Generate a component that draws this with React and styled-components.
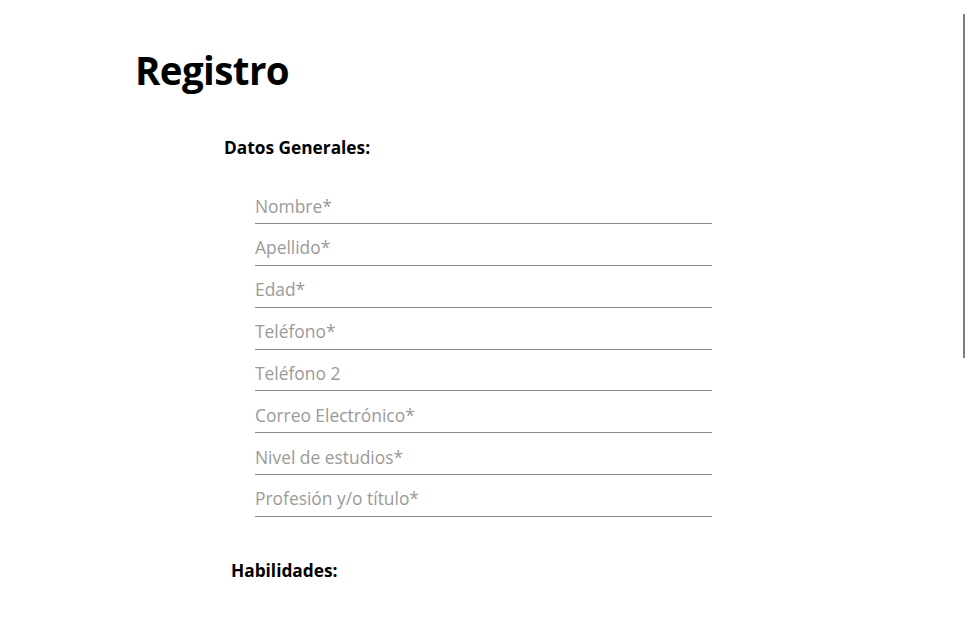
import styled, { createGlobalStyle } from "styled-components";

const GlobalStyle = createGlobalStyle({
  "html, body": {
    margin: 0,
    padding: 0,
    background: "#ffffff",
  },
  body: {
    fontFamily: '"Open Sans", "Noto Sans", sans-serif',
    color: "#000",
  },
});

const fields = [
  "Nombre*",
  "Apellido*",
  "Edad*",
  "Teléfono*",
  "Teléfono 2",
  "Correo Electrónico*",
  "Nivel de estudios*",
  "Profesión y/o título*",
];

const App = () => {
  return (
    <Page>
      <GlobalStyle />
      <Title>Registro</Title>
      <Section>
        <SectionTitle>Datos Generales:</SectionTitle>
        <Fields>
          {fields.map((f) => (
            <Input key={f} placeholder={f} />
          ))}
        </Fields>
      </Section>
      <Section>
        <SectionTitle $indent={7}>Habilidades:</SectionTitle>
      </Section>
      <ScrollThumb />
    </Page>
  );
};

const Page = styled.div({
  padding: "40px 0 0 135px",
  minHeight: "628px",
  boxSizing: "border-box",
});

const Title = styled.h1({
  margin: 0,
  fontSize: "38.5px",
  fontWeight: 700,
  lineHeight: "60px",
  letterSpacing: "-0.6px",
});

const Section = styled.section({
  paddingLeft: "89px",
});

const SectionTitle = styled.h3(({ $indent }) => ({
  margin: "35px 0 0",
  marginLeft: $indent ? `${$indent}px` : 0,
  fontSize: "17.3px",
  fontWeight: 700,
  lineHeight: "26px",
}));

const Fields = styled.div({
  display: "flex",
  flexDirection: "column",
  gap: "7.85px",
  padding: "29px 0 6px 31px",
  width: "457px",
});

const Input = styled.input({
  border: "none",
  borderBottom: "1px solid #8a8a8a",
  padding: "0 0 2px",
  height: "34px",
  boxSizing: "border-box",
  fontFamily: "inherit",
  fontSize: "17.4px",
  color: "#333",
  outline: "none",
  "&::placeholder": {
    color: "#9a9a9a",
  },
});

const ScrollThumb = styled.div({
  position: "fixed",
  top: "14px",
  right: "3px",
  width: "2px",
  height: "344px",
  background: "#7c7c7c",
});

export default App;
